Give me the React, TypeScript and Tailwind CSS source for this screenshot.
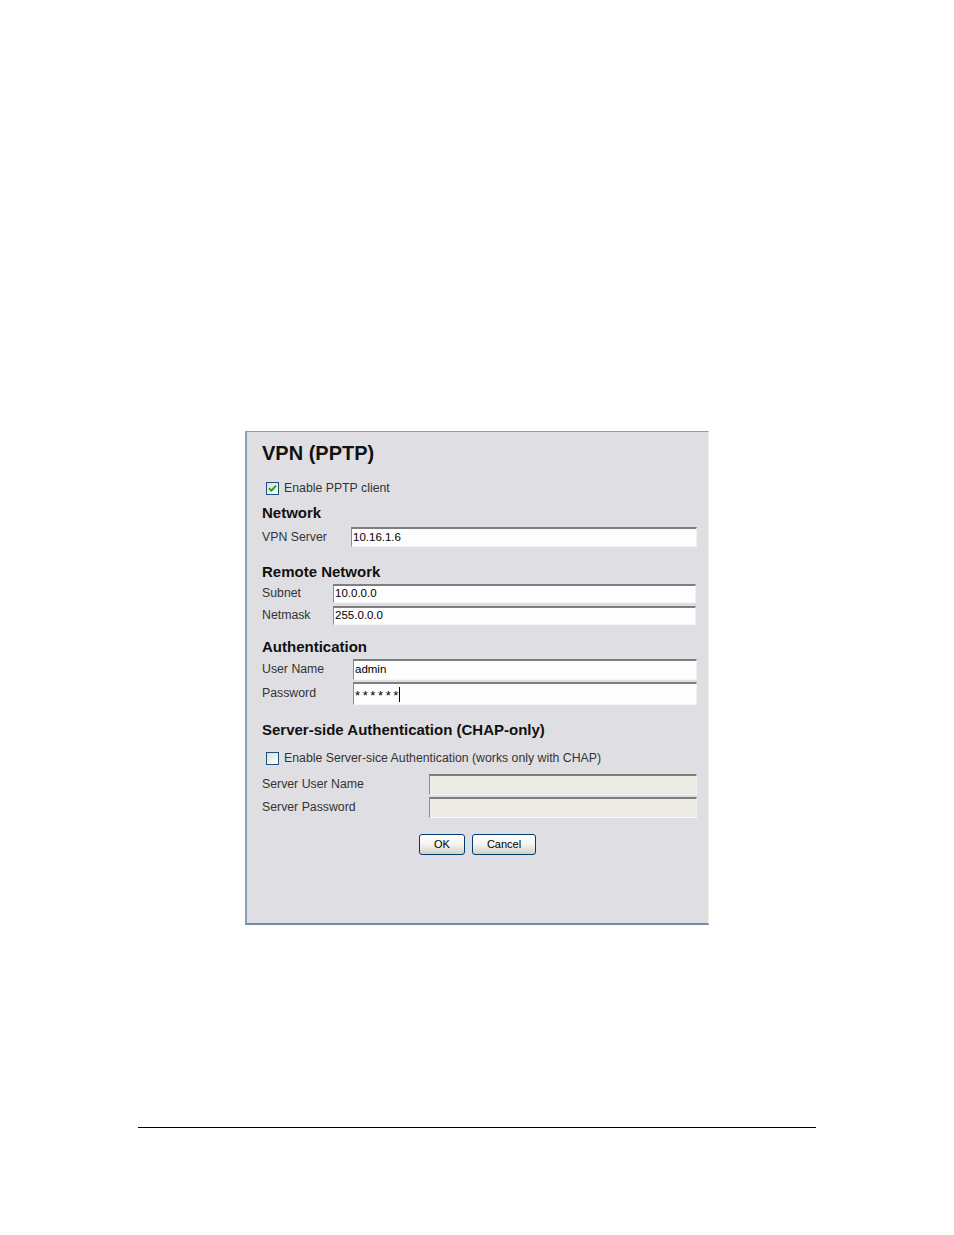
import React from "react";

const font = { fontFamily: '"Liberation Sans", Arial, sans-serif' };

function Input({ value, disabled, className = "", children }: { value?: string; disabled?: boolean; className?: string; children?: React.ReactNode }) {
  return (
    <div
      className={`flex items-center border-t-2 border-l border-b border-r border-t-[#7e7e7e] border-l-[#8c8c8c] border-b-[#f6f6f6] border-r-[#f0f0f0] pl-px text-[11.5px] text-black ${disabled ? "bg-[#ebebe4]" : "bg-[#fdfdfd]"} ${className}`}
    >
      {value}
      {children}
    </div>
  );
}

function Check({ checked }: { checked?: boolean }) {
  return (
    <div className="ml-[4px] mr-[5px] flex h-[13px] w-[13px] items-center justify-center border border-[#1c5180] bg-gradient-to-br from-[#dcdcd7] to-[#ffffff]">
      {checked && (
        <svg width="9" height="9" viewBox="0 0 9 9">
          <path d="M1 4.2 L3.4 6.6 L8 1.6" fill="none" stroke="#21a121" strokeWidth="2" />
        </svg>
      )}
    </div>
  );
}

function Button({ label, w }: { label: string; w: string }) {
  return (
    <div
      className={`${w} flex h-[21px] items-center justify-center rounded-[3px] border border-[#003c74] bg-gradient-to-b from-[#ffffff] via-[#f3f3ef] to-[#d6d0c5] text-[11px] text-black`}
    >
      {label}
    </div>
  );
}

export default function App() {
  return (
    <div className="relative h-[1235px] w-[954px] bg-white" style={font}>
      <div className="pt-[431px] pl-[245px]">
        <div className="flex h-[494px] w-[464px] flex-col border-t border-l-2 border-b-2 border-r border-t-[#7f9db9] border-l-[#8e9eb6] border-b-[#6f8aa8] border-r-[#f6f3e6] bg-[#dfdfe3] pl-[15px] pr-[11px] pt-[9px]">
          <div className="h-[24px] text-[20px] font-bold leading-[24px] text-[#111]">VPN (PPTP)</div>

          <div className="mt-[15px] flex h-[16px] items-center text-[12.3px] text-[#333]">
            <Check checked />
            Enable PPTP client
          </div>

          <div className="mt-[8px] h-[18px] text-[15px] font-bold leading-[18px] text-[#111]">Network</div>

          <div className="mt-[5px] flex h-[20px] items-center text-[12.3px] text-[#333]">
            <div className="w-[89px]">VPN Server</div>
            <Input value="10.16.1.6" className="h-[20px] flex-1" />
          </div>

          <div className="mt-[16px] h-[18px] text-[15px] font-bold leading-[18px] text-[#111]">Remote Network</div>

          <div className="mt-[3px] flex h-[19px] items-center text-[12.3px] text-[#333]">
            <div className="w-[71px]">Subnet</div>
            <Input value="10.0.0.0" className="mr-px h-[19px] flex-1" />
          </div>
          <div className="mt-[3px] flex h-[19px] items-center text-[12.3px] text-[#333]">
            <div className="w-[71px]">Netmask</div>
            <Input value="255.0.0.0" className="mr-px h-[19px] flex-1" />
          </div>

          <div className="mt-[13px] h-[18px] text-[15px] font-bold leading-[18px] text-[#111]">Authentication</div>

          <div className="mt-[3px] flex h-[21px] items-center text-[12.3px] text-[#333]">
            <div className="w-[91px]">User Name</div>
            <Input value="admin" className="h-[21px] flex-1" />
          </div>
          <div className="mt-[2px] flex h-[23px] items-center text-[12.3px] text-[#333]">
            <div className="w-[91px]">Password</div>
            <Input className="h-[23px] flex-1">
              <span className="pt-[3px] text-[13px] tracking-[2.6px]">******</span>
              <span className="ml-[-2px] inline-block h-[15px] w-px bg-black" />
            </Input>
          </div>

          <div className="mt-[16px] h-[18px] text-[15px] font-bold leading-[18px] text-[#111]">Server-side Authentication (CHAP-only)</div>

          <div className="mt-[11px] flex h-[16px] items-center text-[12.3px] text-[#333]">
            <Check />
            Enable Server-sice Authentication (works only with CHAP)
          </div>

          <div className="mt-[8px] flex h-[21px] items-center text-[12.3px] text-[#333]">
            <div className="w-[167px]">Server User Name</div>
            <Input disabled className="h-[21px] flex-1" />
          </div>
          <div className="mt-[2px] flex h-[21px] items-center text-[12.3px] text-[#333]">
            <div className="w-[167px]">Server Password</div>
            <Input disabled className="h-[21px] flex-1" />
          </div>

          <div className="mt-[16px] flex gap-[7px] pl-[157px]">
            <Button label="OK" w="w-[46px]" />
            <Button label="Cancel" w="w-[64px]" />
          </div>
        </div>
      </div>
      <div className="ml-[138px] mt-[202px] h-px w-[678px] bg-black" />
    </div>
  );
}
